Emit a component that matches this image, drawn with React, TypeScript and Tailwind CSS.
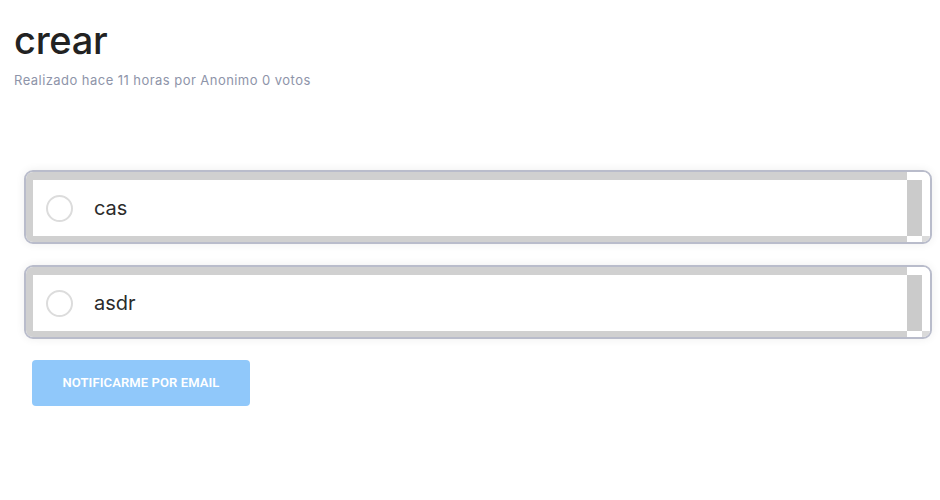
import type { JSX } from "react";

const OPTIONS = ["cas", "asdr"];

function OptionRow({ label }: { label: string }): JSX.Element {
  return (
    <div className="flex h-[74px] overflow-hidden rounded-[9px] border-2 border-[#b9bccb] shadow-[0_0_10px_rgba(0,0,0,0.07)]">
      <div className="flex flex-1 bg-[#d0d0d0] pl-[7px] pt-[8px] pb-[6px]">
        <label className="flex flex-1 items-center bg-white pl-[13px] pt-[1px]">
          <span className="h-[27px] w-[27px] rounded-full border-2 border-[#dcdcdc]" />
          <span className="ml-[21px] text-[20px] text-[#2b2b2b]">{label}</span>
        </label>
      </div>
      <div className="flex w-[15px] flex-col">
        <div className="h-[8px] bg-white" />
        <div className="flex-1 bg-[#cbcbcb]" />
        <div className="h-[6px] bg-white" />
      </div>
      <div className="flex w-[8px] flex-col">
        <div className="flex-1 bg-white" />
        <div className="h-[6px] bg-[#dadada]" />
      </div>
    </div>
  );
}

export default function App(): JSX.Element {
  return (
    <div className="min-h-[500px] bg-white font-['Inter',sans-serif]">
      <div className="pl-[14px] pt-[18px]">
        <h1 className="text-[38px] font-medium leading-[44px] tracking-[-0.3px] text-[#222]">
          crear
        </h1>
        <p className="mt-[9px] text-[13px] tracking-[0.45px] text-[#8e94a9]">
          Realizado hace 11 horas por Anonimo 0 votos
        </p>
      </div>

      <div className="ml-[24px] mr-[8px] mt-[79px] flex flex-col gap-[21px]">
        {OPTIONS.map((o) => (
          <OptionRow key={o} label={o} />
        ))}
      </div>

      <button className="ml-[32px] mt-[21px] flex h-[46px] w-[218px] items-center justify-center rounded-[4px] bg-[#90c8fa] font-['Roboto',sans-serif] text-[13px] font-semibold tracking-[0.1px] text-white">
        NOTIFICARME POR EMAIL
      </button>
    </div>
  );
}
